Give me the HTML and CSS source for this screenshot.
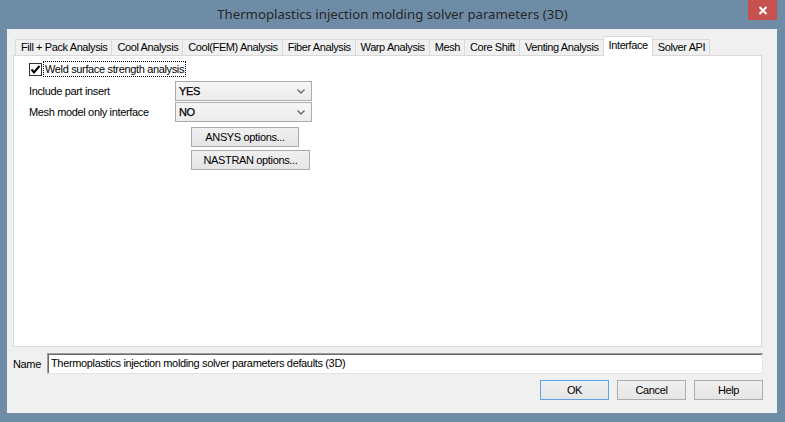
FILE: index.html
```html
<!DOCTYPE html>
<html>
<head>
<meta charset="utf-8">
<link rel="stylesheet" href="styles.css">
</head>
<body>
<div class="window">
  <div class="titlebar">
    <span></span>
    <div class="title">Thermoplastics injection molding solver parameters (3D)</div>
    <div class="close-wrap">
      <div class="close">
        <svg width="10" height="9" viewBox="0 0 10 9"><path d="M1.5 1 L8.5 8 M8.5 1 L1.5 8" stroke="#fff" stroke-width="2"/></svg>
      </div>
    </div>
  </div>
  <div class="client">
    <div class="tabs">
      <div class="tab">Fill + Pack Analysis</div>
      <div class="tab">Cool Analysis</div>
      <div class="tab">Cool(FEM) Analysis</div>
      <div class="tab">Fiber Analysis</div>
      <div class="tab">Warp Analysis</div>
      <div class="tab">Mesh</div>
      <div class="tab">Core Shift</div>
      <div class="tab">Venting Analysis</div>
      <div class="tab active">Interface</div>
      <div class="tab">Solver API</div>
    </div>
    <div class="panel">
      <div class="check-row">
        <span class="checkbox">
          <svg width="11" height="11" viewBox="0 0 11 11"><path d="M1.5 5.5 L4 8.5 L9.5 2" fill="none" stroke="#000" stroke-width="2"/></svg>
        </span>
        <span class="check-label">Weld surface strength analysis</span>
      </div>
      <div class="field-row first">
        <span class="field-label">Include part insert</span>
        <div class="select"><span>YES</span><svg width="8" height="5" viewBox="0 0 8 5"><path d="M0.5 0.5 L4 4 L7.5 0.5" fill="none" stroke="#666" stroke-width="1.3"/></svg></div>
      </div>
      <div class="field-row second">
        <span class="field-label">Mesh model only interface</span>
        <div class="select"><span>NO</span><svg width="8" height="5" viewBox="0 0 8 5"><path d="M0.5 0.5 L4 4 L7.5 0.5" fill="none" stroke="#666" stroke-width="1.3"/></svg></div>
      </div>
      <div class="opt-buttons">
        <div class="btn ansys">ANSYS options...</div>
        <div class="btn nastran">NASTRAN options...</div>
      </div>
    </div>
    <div class="name-row">
      <span class="name-label">Name</span>
      <div class="name-input">Thermoplastics injection molding solver parameters defaults (3D)</div>
    </div>
    <div class="actions">
      <div class="btn action default">OK</div>
      <div class="btn action">Cancel</div>
      <div class="btn action">Help</div>
    </div>
  </div>
</div>
</body>
</html>
```
FILE: styles.css
```css
html, body {
  margin: 0;
  padding: 0;
}
body {
  background: #6f8ca6;
  font-family: "Liberation Sans", Arial, sans-serif;
  font-size: 11px;
  letter-spacing: -0.35px;
  color: #000;
}
.window {
  width: 785px;
  height: 422px;
  background: #6f8ca6;
  display: flex;
  flex-direction: column;
  overflow: hidden;
}
.titlebar {
  height: 29px;
  display: grid;
  grid-template-columns: 1fr auto 1fr;
  align-items: start;
}
.title {
  font-family: "Noto Sans", sans-serif;
  font-size: 13.2px;
  letter-spacing: 0;
  line-height: 29px;
  color: #262626;
  white-space: nowrap;
}
.close-wrap {
  justify-self: end;
  margin-right: 8px;
}
.close {
  width: 29px;
  height: 20px;
  background: #c75050;
  display: flex;
  align-items: center;
  justify-content: center;
}
.client {
  height: 384px;
  margin: 0 8px 0 7px;
  background: #f0f0f0;
  box-sizing: border-box;
  padding-top: 7px;
  display: flex;
  flex-direction: column;
}
.tabs {
  height: 19px;
  display: flex;
  align-items: flex-end;
  margin-left: 8px;
}
.tab {
  height: 16px;
  box-sizing: border-box;
  border: 1px solid #d9d9d9;
  border-bottom: none;
  background: #f0f0f0;
  padding: 0 4px 0 5px;
  line-height: 15px;
  margin-right: -1px;
  white-space: nowrap;
  letter-spacing: -0.4px;
}
.tab.active {
  height: 20px;
  background: #fff;
  margin-bottom: -1px;
  position: relative;
  z-index: 1;
  padding-top: 1px;
  line-height: 14px;
}
.panel {
  height: 292px;
  margin: 0 15px 0 6px;
  box-sizing: border-box;
  border: 1px solid #d9d9d9;
  background: #fff;
  padding: 5px 0 0 15px;
  display: flex;
  flex-direction: column;
}
.check-row {
  height: 16px;
  display: flex;
  align-items: center;
}
.checkbox {
  width: 13px;
  height: 13px;
  box-sizing: border-box;
  border: 1px solid #333;
  background: #fff;
  display: flex;
  align-items: center;
  justify-content: center;
}
.check-label {
  margin-left: 1px;
  border: 1px dotted #000;
  padding: 0 1px;
  line-height: 14px;
}
.field-row {
  height: 20px;
  display: flex;
  align-items: center;
}
.field-row.first {
  margin-top: 4px;
}
.field-row.second {
  margin-top: 1px;
}
.field-label {
  width: 146px;
  flex: none;
}
.select {
  width: 137px;
  height: 20px;
  box-sizing: border-box;
  border: 1px solid #acacac;
  background: linear-gradient(#f6f6f6, #ececec);
  display: flex;
  align-items: center;
  justify-content: space-between;
  padding: 0 6px 0 3px;
}
.select span {
  color: #000;
  -webkit-text-stroke: 0.25px #000;
}
.opt-buttons {
  display: flex;
  flex-direction: column;
  align-items: flex-start;
  margin-left: 162px;
  margin-top: 5px;
}
.btn {
  height: 20px;
  box-sizing: border-box;
  border: 1px solid #acacac;
  background: linear-gradient(#f0f0f0, #e5e5e5);
  display: flex;
  align-items: center;
  justify-content: center;
  white-space: nowrap;
}
.ansys {
  width: 108px;
}
.nastran {
  width: 119px;
  margin-top: 3px;
}
.name-row {
  margin-top: 6px;
  height: 21px;
  display: flex;
  align-items: center;
  padding-left: 6px;
  margin-right: 14px;
}
.name-label {
  width: 34px;
  flex: none;
}
.name-input {
  flex: 1;
  height: 21px;
  box-sizing: border-box;
  border: 1px solid;
  border-color: #9d9d9d #e3e3e3 #e3e3e3 #9d9d9d;
  box-shadow: inset 1px 1px 0 #6a6a6a;
  background: #fff;
  padding: 0 0 0 3px;
  line-height: 19px;
  white-space: nowrap;
}
.actions {
  margin-top: 6px;
  display: flex;
  justify-content: flex-end;
  gap: 8px;
  margin-right: 14px;
}
.btn.action {
  width: 69px;
}
.btn.default {
  border-color: #5da3e6;
}
```
